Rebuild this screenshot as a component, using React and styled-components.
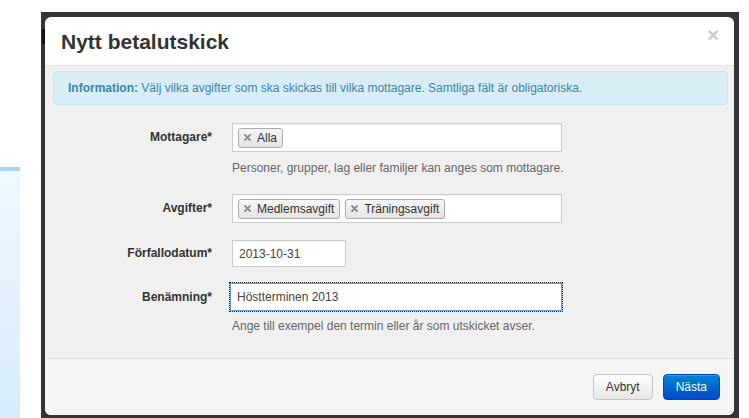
import React from "react";
import styled, { createGlobalStyle } from "styled-components";

const GlobalStyle = createGlobalStyle`
  html, body {
    margin: 0;
    padding: 0;
    background: #ffffff;
    font-family: "Liberation Sans", Arial, sans-serif;
    font-size: 12px;
    color: #333;
  }
`;

function RemoveIcon() {
  return (
    <svg width="7" height="7" viewBox="0 0 7 7">
      <path d="M1 1 L6 6 M6 1 L1 6" stroke="#8c8c8c" strokeWidth="1.8" strokeLinecap="round" />
    </svg>
  );
}

function Tag({ children }) {
  return (
    <StTag>
      <RemoveIcon />
      <span>{children}</span>
    </StTag>
  );
}

function App() {
  return (
    <>
      <GlobalStyle />
      <StPage>
        <StSidePanel />
        <StFrame>
          <StShadowEdge />
          <StModal>
            <StHeader>
              <StTitle>Nytt betalutskick</StTitle>
              <StClose>×</StClose>
            </StHeader>

            <StBody>
              <StAlert>
                <strong>Information:</strong> Välj vilka avgifter som ska skickas till vilka mottagare. Samtliga fält är obligatoriska.
              </StAlert>

              <StRow $gap={18}>
                <StLabel $h={29}>Mottagare*</StLabel>
                <div>
                  <StTagInput>
                    <Tag>Alla</Tag>
                  </StTagInput>
                  <StHelp $top={8}>Personer, grupper, lag eller familjer kan anges som mottagare.</StHelp>
                </div>
              </StRow>

              <StRow $gap={17}>
                <StLabel $h={29}>Avgifter*</StLabel>
                <StTagInput>
                  <Tag>Medlemsavgift</Tag>
                  <Tag>Träningsavgift</Tag>
                </StTagInput>
              </StRow>

              <StRow $gap={16}>
                <StLabel $h={27}>Förfallodatum*</StLabel>
                <StTextInput $w={114} $h={27} defaultValue="2013-10-31" />
              </StRow>

              <StRow $gap={0}>
                <StLabel $h={28}>Benämning*</StLabel>
                <div>
                  <StTextInput $w={332} $h={28} $focused defaultValue="Höstterminen 2013" />
                  <StHelp $top={7}>Ange till exempel den termin eller år som utskicket avser.</StHelp>
                </div>
              </StRow>
            </StBody>

            <StFooter>
              <StButton>Avbryt</StButton>
              <StButton $primary>Nästa</StButton>
            </StFooter>
          </StModal>
        </StFrame>
      </StPage>
    </>
  );
}

export default App;

const StPage = styled.div`
  display: flex;
  align-items: flex-start;
  gap: 21px;
  height: 418px;
  overflow: hidden;
  padding-top: 12px;
  box-sizing: border-box;
`;

const StSidePanel = styled.div`
  width: 20px;
  height: 260px;
  margin-top: 155px;
  border-top: 4px solid #a8d5ee;
  background: linear-gradient(#eef8ff, #d6ebfb);
`;

const StFrame = styled.div`
  position: relative;
  width: 698px;
  background: #353535;
  padding: 5px 5px 3px 4px;
  box-sizing: border-box;
`;

const StShadowEdge = styled.div`
  position: absolute;
  left: 1px;
  top: 17px;
  width: 3px;
  height: 15px;
  background: #111;
`;

const StModal = styled.div`
  display: flex;
  flex-direction: column;
  height: 398px;
  background: #fff;
  border-radius: 6px;
  overflow: hidden;
`;

const StHeader = styled.div`
  display: flex;
  align-items: center;
  justify-content: space-between;
  height: 48px;
  padding: 0 16px;
  border-bottom: 1px solid #e5e5e5;
  flex-shrink: 0;
`;

const StTitle = styled.h3`
  margin: 0;
  font-size: 21px;
  font-weight: bold;
  color: #333;
  line-height: 24px;
  padding-top: 1px;
`;

const StClose = styled.span`
  font-size: 20px;
  font-weight: bold;
  color: #c9c9c9;
  line-height: 20px;
  margin-top: -12px;
  margin-right: -1px;
`;

const StBody = styled.div`
  flex: 1;
  background: #f0f0f0;
  padding: 5px 6px 0 8px;
`;

const StAlert = styled.div`
  padding: 8px 14px;
  line-height: 16px;
  background: #d9edf7;
  border: 1px solid #bce8f1;
  border-radius: 4px;
  color: #3a87ad;
  margin-bottom: 18px;
`;

const StRow = styled.div`
  display: grid;
  grid-template-columns: 159px 1fr;
  column-gap: 20px;
  align-items: start;
  margin-bottom: ${(p) => p.$gap}px;
`;

const StLabel = styled.label`
  text-align: right;
  font-weight: bold;
  color: #333;
  line-height: ${(p) => p.$h}px;
`;

const StTagInput = styled.div`
  display: flex;
  align-items: center;
  gap: 5px;
  width: 330px;
  height: 29px;
  padding: 0 5px;
  box-sizing: border-box;
  background: #fff;
  border: 1px solid #ccc;
  box-shadow: inset 0 1px 1px rgba(0, 0, 0, 0.05);
`;

const StTag = styled.div`
  display: flex;
  align-items: center;
  gap: 6px;
  height: 20px;
  padding: 0 5px 0 5px;
  box-sizing: border-box;
  border: 1px solid #aaa;
  border-radius: 3px;
  background: linear-gradient(#f6f6f6, #e4e4e4);
  color: #333;
  font-size: 12px;
`;

const StTextInput = styled.input`
  display: block;
  width: ${(p) => p.$w}px;
  height: ${(p) => p.$h}px;
  box-sizing: border-box;
  padding: 0 6px;
  font-family: "Liberation Sans", Arial, sans-serif;
  font-size: 12px;
  color: #444;
  background: #fff;
  border: 1px solid ${(p) => (p.$focused ? "#5b9dd9" : "#ccc")};
  outline: ${(p) => (p.$focused ? "1px dotted #222" : "none")};
  margin-left: ${(p) => (p.$focused ? "-2px" : "0")};
  box-shadow: ${(p) =>
    p.$focused ? "0 0 2px rgba(82, 168, 236, 0.6)" : "inset 0 1px 1px rgba(0, 0, 0, 0.05)"};
`;

const StHelp = styled.div`
  margin-top: ${(p) => p.$top}px;
  line-height: 16px;
  color: #666;
`;

const StFooter = styled.div`
  display: flex;
  justify-content: flex-end;
  align-items: center;
  gap: 10px;
  height: 56px;
  padding: 0 14px;
  flex-shrink: 0;
  background: #f5f5f5;
  border-top: 1px solid #ddd;
`;

const StButton = styled.button`
  height: 26px;
  padding: 0 12px;
  font-family: "Liberation Sans", Arial, sans-serif;
  font-size: 12px;
  border-radius: 4px;
  cursor: pointer;
  color: ${(p) => (p.$primary ? "#fff" : "#333")};
  border: 1px solid ${(p) => (p.$primary ? "#0044cc" : "#c5c5c5")};
  background: ${(p) =>
    p.$primary ? "linear-gradient(#0088cc, #0048cc)" : "linear-gradient(#ffffff, #e6e6e6)"};
  box-shadow: inset 0 1px 0 rgba(255, 255, 255, 0.2);
`;
